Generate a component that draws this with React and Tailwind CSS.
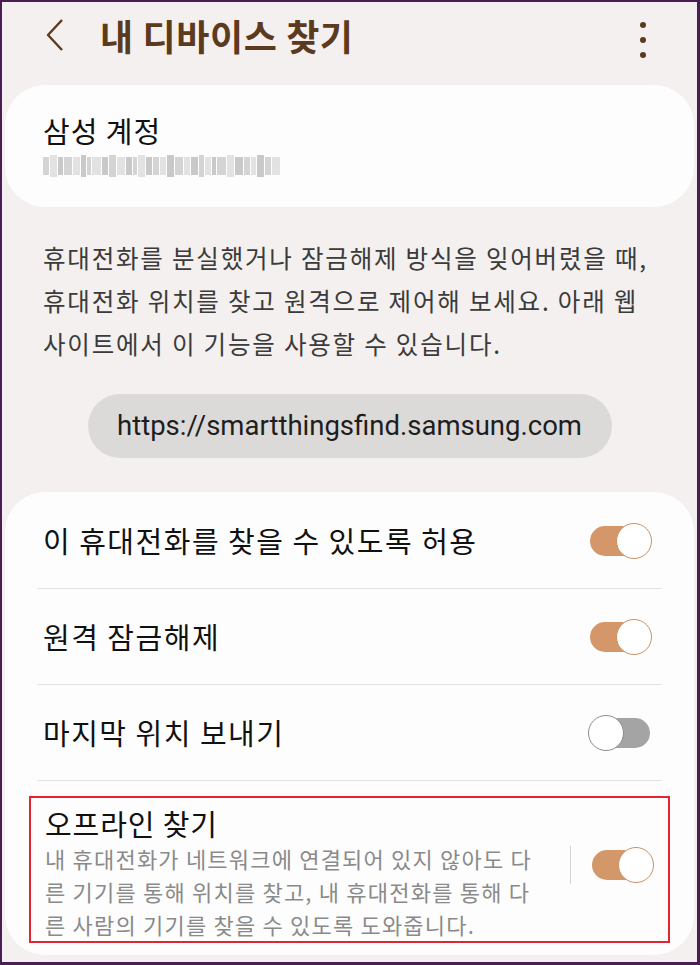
import React from 'react';

const kr = { fontFamily: '"Noto Sans CJK KR", "Noto Sans", sans-serif' };

function Toggle({ on }) {
  return (
    <div className="relative w-[62px] h-[36px] flex items-center shrink-0">
      <div
        className={`w-[60px] h-[30px] rounded-full ${on ? 'bg-[#d4976a]' : 'bg-[#a4a4a4]'}`}
      />
      <div
        className={`absolute top-0 w-[36px] h-[36px] rounded-full bg-white border-[1.5px] ${
          on ? 'right-0 border-[#c98f64]' : 'left-[-2px] border-[#8c8c8c]'
        }`}
      />
    </div>
  );
}

function Row({ label, on }) {
  return (
    <div className="mx-[32px]">
      <div className="h-[95px] flex items-center justify-between pl-[6px] pr-[10px]">
        <span className="text-[29px] text-[#111] tracking-[1.5px]">{label}</span>
        <Toggle on={on} />
      </div>
      <div className="h-px bg-[#e4e2e1]" />
    </div>
  );
}

export default function App() {
  return (
    <div
      className="w-[700px] h-[965px] border-t-2 border-l-2 border-r-[3px] border-b-[3px] border-[#4b1d55] bg-[#f4f0ef] px-[3px] overflow-hidden"
      style={kr}
    >
      {/* Header */}
      <div className="h-[83px] flex items-start pt-[13px] pl-[38px] pr-[48px]">
        <svg width="26" height="36" viewBox="0 0 26 36" className="mt-[2px]">
          <polyline points="19,3 5,18 19,33" fill="none" stroke="#5b3a1e" strokeWidth="2.4" strokeLinejoin="round" />
        </svg>
        <h1 className="ml-[31px] text-[36px] font-bold text-[#5b3a1e] leading-[40px] tracking-[0.6px]">
          내 디바이스 찾기
        </h1>
        <div className="ml-auto flex flex-col gap-[9px] pt-[7px]">
          <span className="w-[6px] h-[6px] rounded-full bg-[#5b3a1e]" />
          <span className="w-[6px] h-[6px] rounded-full bg-[#5b3a1e]" />
          <span className="w-[6px] h-[6px] rounded-full bg-[#5b3a1e]" />
        </div>
      </div>

      {/* Samsung account card */}
      <div className="bg-[#fdfdfd] rounded-[40px] h-[122px] pl-[38px] pt-[26px]">
        <div className="text-[29px] text-[#111] leading-[38px] tracking-[1px]">삼성 계정</div>
        <div className="mt-[4px] flex items-center gap-[1px] h-[26px]">
          {[6, 7, 5, 8, 7, 5, 4, 9, 6, 7, 8, 6, 4, 7, 6, 6, 6, 7, 8, 6, 7, 5, 6, 4, 9, 7, 8, 6, 5, 7, 6, 8].map((w, i) => (
            <span
              key={i}
              className={`${i % 4 === 1 ? 'h-[22px]' : 'h-[18px]'} ${
                i % 3 === 0 ? 'bg-[#d4d4d4]' : i % 3 === 1 ? 'bg-[#e2e2e2]' : 'bg-[#c9c9c9]'
              }`}
              style={{ width: w }}
            />
          ))}
        </div>
      </div>

      {/* Description */}
      <p className="mt-[29px] pl-[38px] text-[24.5px] leading-[43px] text-[#3b3b3b] tracking-[1.8px]">
        휴대전화를 분실했거나 잠금해제 방식을 잊어버렸을 때,
        <br />
        휴대전화 위치를 찾고 원격으로 제어해 보세요. 아래 웹
        <br />
        사이트에서 이 기능을 사용할 수 있습니다.
      </p>

      {/* URL pill */}
      <div className="mt-[29px] flex justify-center">
        <div
          className="w-[524px] h-[64px] rounded-full bg-[#dcdad9] flex items-center justify-center text-[27.5px] text-[#1e1e1e]"
          style={{ fontFamily: 'Roboto, "Noto Sans", sans-serif' }}
        >
          https://smartthingsfind.samsung.com
        </div>
      </div>

      {/* Settings card */}
      <div className="mt-[34px] bg-[#fdfdfd] rounded-[40px] h-[463px] pt-[1px]">
        <Row label="이 휴대전화를 찾을 수 있도록 허용" on />
        <Row label="원격 잠금해제" on />
        <Row label="마지막 위치 보내기" on={false} />
        <div className="mt-[15px] mx-[24px] border-2 border-[#e02630] h-[147px] flex items-start pl-[14px] pr-[14px]">
          <div className="flex-1 pt-[7px]">
            <div className="text-[29px] text-[#111] leading-[36px] tracking-[0.9px]">오프라인 찾기</div>
            <div className="mt-[1px] text-[22px] leading-[33px] text-[#8a8a8a] tracking-[1.2px]">
              내 휴대전화가 네트워크에 연결되어 있지 않아도 다
              <br />
              른 기기를 통해 위치를 찾고, 내 휴대전화를 통해 다
              <br />
              른 사람의 기기를 찾을 수 있도록 도와줍니다.
            </div>
          </div>
          <div className="w-px h-[38px] bg-[#d6d4d3] mr-[21px] mt-[48px]" />
          <div className="mt-[49px]">
            <Toggle on />
          </div>
        </div>
      </div>
    </div>
  );
}
